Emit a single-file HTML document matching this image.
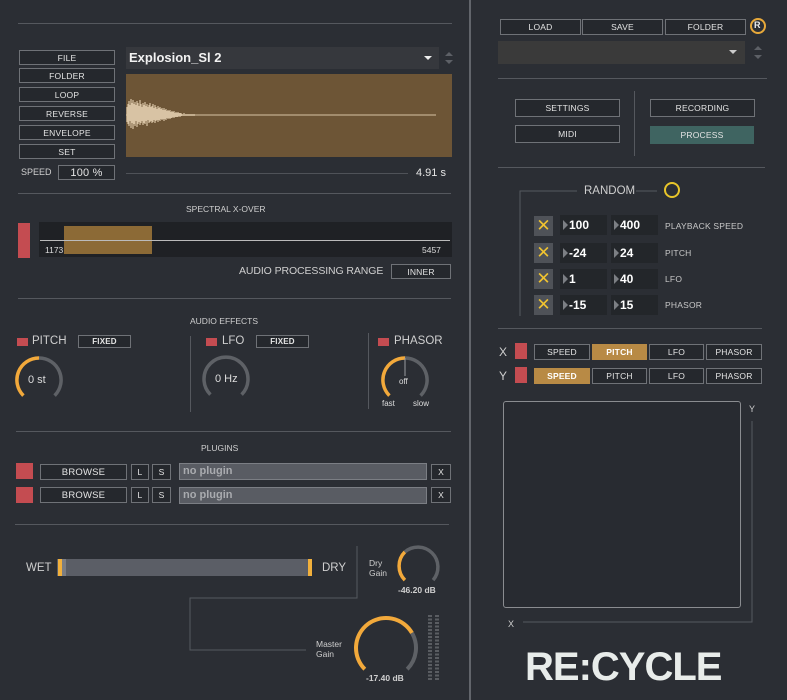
<!DOCTYPE html>
<html><head><meta charset="utf-8"><style>
*{margin:0;padding:0;box-sizing:border-box}
body{width:787px;height:700px;background:#2b2e34;position:relative;overflow:hidden;font-family:"Liberation Sans",sans-serif;color:#d6d6d6}
.a{position:absolute}
.b{position:absolute;border:1.5px solid #6f7277;background:#25282d;color:#e4e4e4;font-size:8.5px;text-align:center;display:flex;align-items:center;justify-content:center;letter-spacing:.2px}
.h{position:absolute;height:1px;background:#55585e}
.v{position:absolute;width:1px;background:#55585e}
.t{position:absolute;font-size:9px;color:#cfcfcf;white-space:nowrap}
.red{position:absolute;background:#c44c51}
.xb{position:absolute;width:19px;height:20px;background:#4f5258;color:#f0c330;font-size:17px;line-height:20px;text-align:center}
.vb{position:absolute;width:47px;height:20px;background:#23262a;color:#fff;font-weight:bold;font-size:12px;line-height:20px;padding-left:3px}
.vb i{display:inline-block;width:0;height:0;border-top:5px solid transparent;border-bottom:5px solid transparent;border-left:5px solid #7c7f84;margin-right:1px;vertical-align:-1px}
.or{background:#b88a45!important;color:#fff!important;border-color:#b88a45!important}
.np{position:absolute;left:179px;width:248px;height:17px;background:#595c63;border:1px solid #7b7e84;color:#a9abaf;font-weight:bold;font-size:11px;padding-left:3px;line-height:15px}
.rl{position:absolute;font-size:8.5px;color:#c8c8c8;white-space:nowrap;letter-spacing:.2px}
</style></head><body>
<!-- LEFT -->
<div class="h" style="left:18px;top:23px;width:434px"></div>
<div class="v" style="left:469px;top:0;height:700px;background:#62656b;width:1.5px"></div>

<div class="b" style="left:19px;top:50px;width:96px;height:15px">FILE</div>
<div class="b" style="left:19px;top:68px;width:96px;height:15px">FOLDER</div>
<div class="b" style="left:19px;top:87px;width:96px;height:15px">LOOP</div>
<div class="b" style="left:19px;top:106px;width:96px;height:15px">REVERSE</div>
<div class="b" style="left:19px;top:125px;width:96px;height:15px">ENVELOPE</div>
<div class="b" style="left:19px;top:144px;width:96px;height:15px">SET</div>
<div class="t" style="left:21px;top:167px;font-size:9px">SPEED</div>
<div class="b" style="left:58px;top:165px;width:57px;height:15px;font-size:11px">100 %</div>

<div class="a" style="left:126px;top:47px;width:313px;height:22px;background:#36383d"></div>
<div class="t" style="left:129px;top:50px;font-size:13px;font-weight:bold;color:#f2f2f2">Explosion_Sl 2</div>
<div class="a" style="left:424px;top:56px;border-left:4px solid transparent;border-right:4px solid transparent;border-top:4px solid #eee"></div>
<div class="a" style="left:445px;top:52px;border-left:4px solid transparent;border-right:4px solid transparent;border-bottom:4px solid #5d6066"></div>
<div class="a" style="left:445px;top:60px;border-left:4px solid transparent;border-right:4px solid transparent;border-top:4px solid #5d6066"></div>

<div class="a" style="left:126px;top:74px;width:326px;height:83px;background:#6d5536"></div>
<svg class="a" style="left:126px;top:74px" width="326" height="83">
<line x1="0" y1="41" x2="310" y2="41" stroke="#d8c3a4" stroke-width="1"/>
<g stroke="#d8c3a4" stroke-width="1.2">
<path d="M1 33V48M2 30V50M3 27V52M4 31V47M5 25V54M6 29V49M7 26V55M8 30V50M9 28V52M10 31V47M11 27V53M12 29V50M13 32V48M14 26V51M15 30V49M16 33V47M17 29V51M18 31V49M19 28V50M20 32V47M21 30V52M22 33V46M23 31V49M24 29V48M25 33V47M26 32V49M27 30V48M28 34V46M29 31V49M30 33V47M31 35V46M32 32V48M33 34V46M34 33V47M35 35V45M36 34V46M37 36V45M38 34V47M39 36V45M40 35V46M41 37V44M42 36V45M43 37V44M44 36V45M45 38V44M46 37V44M47 38V43M48 37V44M49 39V43M50 38V43M51 39V43M52 38V43M53 39V42M54 39V43M55 39V42M56 40V42M58 39V42M60 40V42M62 40V42M64 40V42M66 40V42M68 40V42"/>
</g>
</svg>
<div class="h" style="left:126px;top:173px;width:282px;background:#4f5258"></div>
<div class="t" style="left:416px;top:167px;font-size:11px;color:#e6e6e6">4.91 s</div>
<div class="h" style="left:18px;top:193px;width:433px"></div>
<div class="t" style="left:186px;top:204px;font-size:8.5px">SPECTRAL X-OVER</div>
<div class="red" style="left:18px;top:223px;width:12px;height:35px"></div>
<div class="a" style="left:39px;top:222px;width:413px;height:35px;background:#1f2125"></div>
<div class="a" style="left:64px;top:226px;width:88px;height:28px;background:#8c6a36"></div>
<div class="h" style="left:40px;top:240px;width:410px;background:#bbb"></div>
<div class="t" style="left:45px;top:245px;font-size:8.5px;color:#ddd">1173</div>
<div class="t" style="left:422px;top:245px;font-size:8.5px;color:#ddd">5457</div>
<div class="t" style="left:239px;top:265px;font-size:10.5px;letter-spacing:-.1px">AUDIO PROCESSING RANGE</div>
<div class="b" style="left:391px;top:264px;width:60px;height:15px">INNER</div>
<div class="h" style="left:18px;top:298px;width:433px"></div>

<div class="t" style="left:190px;top:316px;font-size:8.5px">AUDIO EFFECTS</div>
<div class="red" style="left:17px;top:338px;width:11px;height:8px"></div>
<div class="t" style="left:32px;top:335px;font-size:11.5px">PITCH</div>
<div class="b" style="left:78px;top:335px;width:53px;height:13px;font-weight:bold;font-size:8px">FIXED</div>
<div class="v" style="left:190px;top:336px;height:76px"></div>
<div class="red" style="left:206px;top:338px;width:11px;height:8px"></div>
<div class="t" style="left:222px;top:335px;font-size:11.5px">LFO</div>
<div class="b" style="left:256px;top:335px;width:53px;height:13px;font-weight:bold;font-size:8px">FIXED</div>
<div class="v" style="left:368px;top:333px;height:76px"></div>
<div class="red" style="left:378px;top:338px;width:11px;height:8px"></div>
<div class="t" style="left:394px;top:335px;font-size:11.5px">PHASOR</div>

<svg class="a" style="left:0;top:0" width="787" height="700">
<g fill="none" stroke-width="3.5">
<path d="M23.4 395.6 A22 22 0 0 1 39 358" stroke="#f2a93b"/>
<path d="M39 358 A22 22 0 0 1 54.6 395.6" stroke="#5e6166"/>
<path d="M210.4 394.6 A22 22 0 1 1 241.6 394.6" stroke="#5e6166"/>
<path d="M389.4 395.6 A22 22 0 0 1 405 358" stroke="#f2a93b"/>
<path d="M405 358 A22 22 0 0 1 420.6 395.6" stroke="#5e6166"/>
<path d="M404.9 580.1 A20 20 0 0 1 404.9 551.9" stroke="#f2a93b"/>
<path d="M404.9 551.9 A20 20 0 0 1 433.1 580.1" stroke="#5e6166"/>
<path d="M364.8 669.2 A30 30 0 1 1 412 633" stroke="#f2a93b" stroke-width="4"/>
<path d="M412 633 A30 30 0 0 1 407.2 669.2" stroke="#5e6166" stroke-width="4"/>
</g>
<line x1="405" y1="358" x2="405" y2="376" stroke="#9a9ca0" stroke-width="1"/>
<g stroke="#56595f" stroke-width="1" fill="none">
<path d="M357 546 V598 H190 V650 H306"/>
<path d="M752 421 V622 H523"/>
<path d="M520 316 V191 H577 M636 191 H657"/>
</g>
<circle cx="672" cy="190" r="7" fill="none" stroke="#e8c52a" stroke-width="2"/>
<circle cx="758" cy="26" r="7" fill="none" stroke="#e8a93a" stroke-width="2"/>
<circle cx="619" cy="552" r="6" fill="none" stroke="#e4de2c" stroke-width="2"/>
<g stroke="#5a5d62" stroke-width="4" stroke-dasharray="2 1.5">
<line x1="430" y1="615" x2="430" y2="681"/><line x1="437" y1="615" x2="437" y2="681"/>
</g>
</svg>
<div class="t" style="left:28px;top:374px;font-size:11px;color:#ddd">0 st</div>
<div class="t" style="left:215px;top:373px;font-size:11px;color:#ddd">0 Hz</div>
<div class="t" style="left:399px;top:377px;font-size:8px;color:#ddd">off</div>
<div class="t" style="left:382px;top:399px;font-size:8px;color:#ddd">fast</div>
<div class="t" style="left:413px;top:399px;font-size:8px;color:#ddd">slow</div>
<div class="h" style="left:16px;top:431px;width:435px"></div>

<div class="t" style="left:201px;top:443px;font-size:8.5px">PLUGINS</div>
<div class="red" style="left:16px;top:463px;width:17px;height:16px"></div>
<div class="b" style="left:40px;top:464px;width:87px;height:16px;font-size:9.5px">BROWSE</div>
<div class="b" style="left:131px;top:464px;width:18px;height:16px">L</div>
<div class="b" style="left:152px;top:464px;width:19px;height:16px">S</div>
<div class="np" style="top:463px">no plugin</div>
<div class="b" style="left:431px;top:464px;width:20px;height:16px">X</div>
<div class="red" style="left:16px;top:487px;width:17px;height:16px"></div>
<div class="b" style="left:40px;top:487px;width:87px;height:16px;font-size:9.5px">BROWSE</div>
<div class="b" style="left:131px;top:487px;width:18px;height:16px">L</div>
<div class="b" style="left:152px;top:487px;width:19px;height:16px">S</div>
<div class="np" style="top:487px">no plugin</div>
<div class="b" style="left:431px;top:487px;width:20px;height:16px">X</div>
<div class="h" style="left:15px;top:524px;width:434px"></div>

<div class="t" style="left:26px;top:562px;font-size:11.5px">WET</div>
<div class="a" style="left:57px;top:559px;width:255px;height:17px;background:#5b5e66"></div>
<div class="a" style="left:58px;top:559px;width:4px;height:17px;background:#f1b03c"></div>
<div class="a" style="left:62px;top:559px;width:4px;height:17px;background:#7a7d84"></div>
<div class="a" style="left:308px;top:559px;width:4px;height:17px;background:#f1b03c"></div>
<div class="t" style="left:322px;top:562px;font-size:11.5px">DRY</div>
<div class="t" style="left:369px;top:558px;font-size:8.5px;line-height:10px">Dry<br>Gain</div>
<div class="t" style="left:398px;top:585px;font-size:8.5px;font-weight:bold">-46.20 dB</div>
<div class="t" style="left:316px;top:639px;font-size:8.5px;line-height:10px">Master<br>Gain</div>
<div class="t" style="left:366px;top:673px;font-size:8.5px;font-weight:bold">-17.40 dB</div>

<!-- RIGHT -->
<div class="b" style="left:500px;top:19px;width:81px;height:16px">LOAD</div>
<div class="b" style="left:582px;top:19px;width:81px;height:16px">SAVE</div>
<div class="b" style="left:665px;top:19px;width:81px;height:16px">FOLDER</div>
<div class="t" style="left:754px;top:20px;font-size:9px;font-weight:bold;color:#eee">R</div>
<div class="a" style="left:498px;top:41px;width:247px;height:23px;background:#3a3a3a"></div>
<div class="a" style="left:729px;top:50px;border-left:4px solid transparent;border-right:4px solid transparent;border-top:4px solid #ccc"></div>
<div class="a" style="left:754px;top:46px;border-left:4px solid transparent;border-right:4px solid transparent;border-bottom:4px solid #5d6066"></div>
<div class="a" style="left:754px;top:55px;border-left:4px solid transparent;border-right:4px solid transparent;border-top:4px solid #5d6066"></div>
<div class="h" style="left:498px;top:78px;width:269px"></div>
<div class="v" style="left:634px;top:91px;height:65px"></div>
<div class="b" style="left:515px;top:99px;width:105px;height:18px">SETTINGS</div>
<div class="b" style="left:515px;top:125px;width:105px;height:18px">MIDI</div>
<div class="b" style="left:650px;top:99px;width:105px;height:18px">RECORDING</div>
<div class="b" style="left:650px;top:126px;width:104px;height:18px;background:#3f6461;border-color:#3f6461">PROCESS</div>
<div class="h" style="left:498px;top:167px;width:267px"></div>
<div class="t" style="left:584px;top:185px;font-size:11.5px">RANDOM</div>

<div class="xb" style="left:534px;top:216px">✕</div>
<div class="vb" style="left:560px;top:215px"><i></i>100</div>
<div class="vb" style="left:611px;top:215px"><i></i>400</div>
<div class="rl" style="left:665px;top:221px">PLAYBACK SPEED</div>
<div class="xb" style="left:534px;top:243px">✕</div>
<div class="vb" style="left:560px;top:243px"><i></i>-24</div>
<div class="vb" style="left:611px;top:243px"><i></i>24</div>
<div class="rl" style="left:665px;top:248px">PITCH</div>
<div class="xb" style="left:534px;top:269px">✕</div>
<div class="vb" style="left:560px;top:269px"><i></i>1</div>
<div class="vb" style="left:611px;top:269px"><i></i>40</div>
<div class="rl" style="left:665px;top:274px">LFO</div>
<div class="xb" style="left:534px;top:295px">✕</div>
<div class="vb" style="left:560px;top:295px"><i></i>-15</div>
<div class="vb" style="left:611px;top:295px"><i></i>15</div>
<div class="rl" style="left:665px;top:300px">PHASOR</div>
<div class="h" style="left:498px;top:328px;width:264px"></div>

<div class="t" style="left:499px;top:345px;font-size:12px">X</div>
<div class="red" style="left:515px;top:343px;width:12px;height:16px"></div>
<div class="b" style="left:534px;top:344px;width:56px;height:16px">SPEED</div>
<div class="b or" style="left:592px;top:344px;width:55px;height:16px;font-weight:bold">PITCH</div>
<div class="b" style="left:649px;top:344px;width:55px;height:16px">LFO</div>
<div class="b" style="left:706px;top:344px;width:56px;height:16px">PHASOR</div>
<div class="t" style="left:499px;top:369px;font-size:12px">Y</div>
<div class="red" style="left:515px;top:367px;width:12px;height:16px"></div>
<div class="b or" style="left:534px;top:368px;width:56px;height:16px;font-weight:bold">SPEED</div>
<div class="b" style="left:592px;top:368px;width:55px;height:16px">PITCH</div>
<div class="b" style="left:649px;top:368px;width:55px;height:16px">LFO</div>
<div class="b" style="left:706px;top:368px;width:56px;height:16px">PHASOR</div>

<div class="a" style="left:503px;top:401px;width:238px;height:207px;border:1.5px solid #8a8c90;border-radius:3px;background:#282b31"></div>
<div class="t" style="left:749px;top:404px;font-size:9px">Y</div>
<div class="t" style="left:508px;top:619px;font-size:9px">X</div>
<div class="t" style="left:525px;top:645px;font-size:40px;font-weight:bold;color:#e8ecea;letter-spacing:-1px">RE:CYCLE</div>
</body></html>
